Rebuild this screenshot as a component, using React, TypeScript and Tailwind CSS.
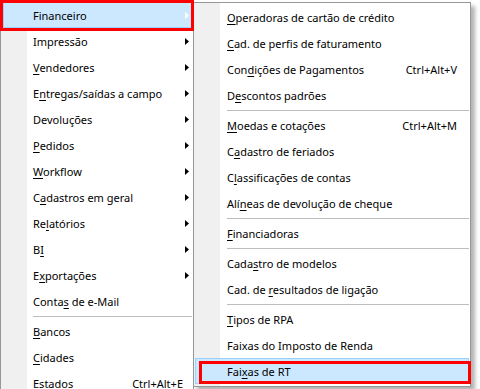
import React from "react";

type Item =
  | { label: string; shortcut?: string; sub?: boolean; active?: boolean }
  | "sep";

const mainItems: Item[] = [
  { label: "Financeiro", sub: true, active: true },
  { label: "Impressão", sub: true },
  { label: "&Vendedores", sub: true },
  { label: "E&ntregas/saídas a campo", sub: true },
  { label: "Devoluções", sub: true },
  { label: "&Pedidos", sub: true },
  { label: "&Workflow", sub: true },
  { label: "C&adastros em geral", sub: true },
  { label: "Re&latórios", sub: true },
  { label: "B&I", sub: true },
  { label: "E&xportações", sub: true },
  { label: "Conta&s de e-Mail" },
  "sep",
  { label: "&Bancos" },
  { label: "&Cidades" },
  { label: "Estados", shortcut: "Ctrl+Alt+E" },
];

const subItems: Item[] = [
  { label: "&Operadoras de cartão de crédito" },
  { label: "&Cad. de perfis de faturamento" },
  { label: "Con&dições de Pagamentos", shortcut: "Ctrl+Alt+V" },
  { label: "D&escontos padrões" },
  "sep",
  { label: "&Moedas e cotações", shortcut: "Ctrl+Alt+M" },
  { label: "C&adastro de feriados" },
  { label: "C&lassificações de contas" },
  { label: "Alí&neas de devolução de cheque" },
  "sep",
  { label: "&Financiadoras" },
  "sep",
  { label: "Cada&stro de modelos" },
  { label: "Cad. de &resultados de ligação" },
  "sep",
  { label: "&Tipos de RPA" },
  { label: "Faixas do Imposto de Renda" },
  { label: "Fai&xas de RT", active: true },
];

// "&" marks the access key letter (underlined)
function Label({ text }: { text: string }) {
  const i = text.indexOf("&");
  if (i < 0) return <>{text}</>;
  return (
    <>
      {text.slice(0, i)}
      <u className="underline decoration-1 underline-offset-[2px]">{text[i + 1]}</u>
      {text.slice(i + 2)}
    </>
  );
}

function Arrow({ light }: { light?: boolean }) {
  return (
    <svg width="4" height="7" viewBox="0 0 4 7" className={light ? "text-white" : "text-black"}>
      <path d="M0 0L4 3.5L0 7Z" fill="currentColor" />
    </svg>
  );
}

function MainMenu() {
  return (
    <div className="box-border h-full w-[194px] border-x border-[#979797] bg-[linear-gradient(to_right,#f0f0f0_26px,#ffffff_26px)] pl-[2px] pr-px pt-[2px]">
      {mainItems.map((it, idx) =>
        it === "sep" ? (
          <div key={idx} className="h-[4px] pl-[30px] pt-[2px]">
            <div className="h-px bg-[#bdbdbd]" />
          </div>
        ) : (
          <div
            key={idx}
            className={
              "box-border flex h-[26px] items-center border pl-[29px] pr-[2px] " +
              (it.active ? "border-[#99d1ff] bg-[#cce8ff]" : "border-transparent")
            }
          >
            <span className="flex-1 whitespace-nowrap">
              <Label text={it.label} />
            </span>
            {it.shortcut && <span className="whitespace-nowrap">{it.shortcut}</span>}
            <span className="flex w-[6px] justify-end">{it.sub && <Arrow light={it.active} />}</span>
          </div>
        )
      )}
    </div>
  );
}

function SubMenu() {
  return (
    <div className="absolute left-[193px] top-[2px] box-border w-[278px] border border-[#979797] bg-[linear-gradient(to_right,#f0f0f0_26px,#ffffff_26px)] px-px pb-[2px] pt-px shadow-[4px_4px_4px_rgba(0,0,0,0.3)]">
      {subItems.map((it, idx) =>
        it === "sep" ? (
          <div key={idx} className="h-[4px] pl-[32px] pt-[2px]">
            <div className="h-px bg-[#bdbdbd]" />
          </div>
        ) : (
          <div
            key={idx}
            className={
              "box-border flex h-[26px] items-center border pl-[31px] pr-[11px] " +
              (it.active ? "border-[#99d1ff] bg-[#cce8ff]" : "border-transparent")
            }
          >
            <span className="flex-1 whitespace-nowrap">
              <Label text={it.label} />
            </span>
            {it.shortcut && <span className="whitespace-nowrap">{it.shortcut}</span>}
          </div>
        )
      )}
    </div>
  );
}

export default function App() {
  return (
    <div className="relative h-[389px] w-[480px] overflow-hidden bg-white font-['Noto_Sans',sans-serif] text-[11px] leading-none text-black">
      <MainMenu />
      <SubMenu />
      {/* red highlight frames */}
      <div className="pointer-events-none absolute left-0 top-0 box-border h-[31px] w-[194px] border-[3px] border-[#ff0000]" />
      <div className="pointer-events-none absolute left-[199px] top-[361px] box-border h-[23px] w-[272px] border-[3px] border-[#ff0000]" />
    </div>
  );
}
